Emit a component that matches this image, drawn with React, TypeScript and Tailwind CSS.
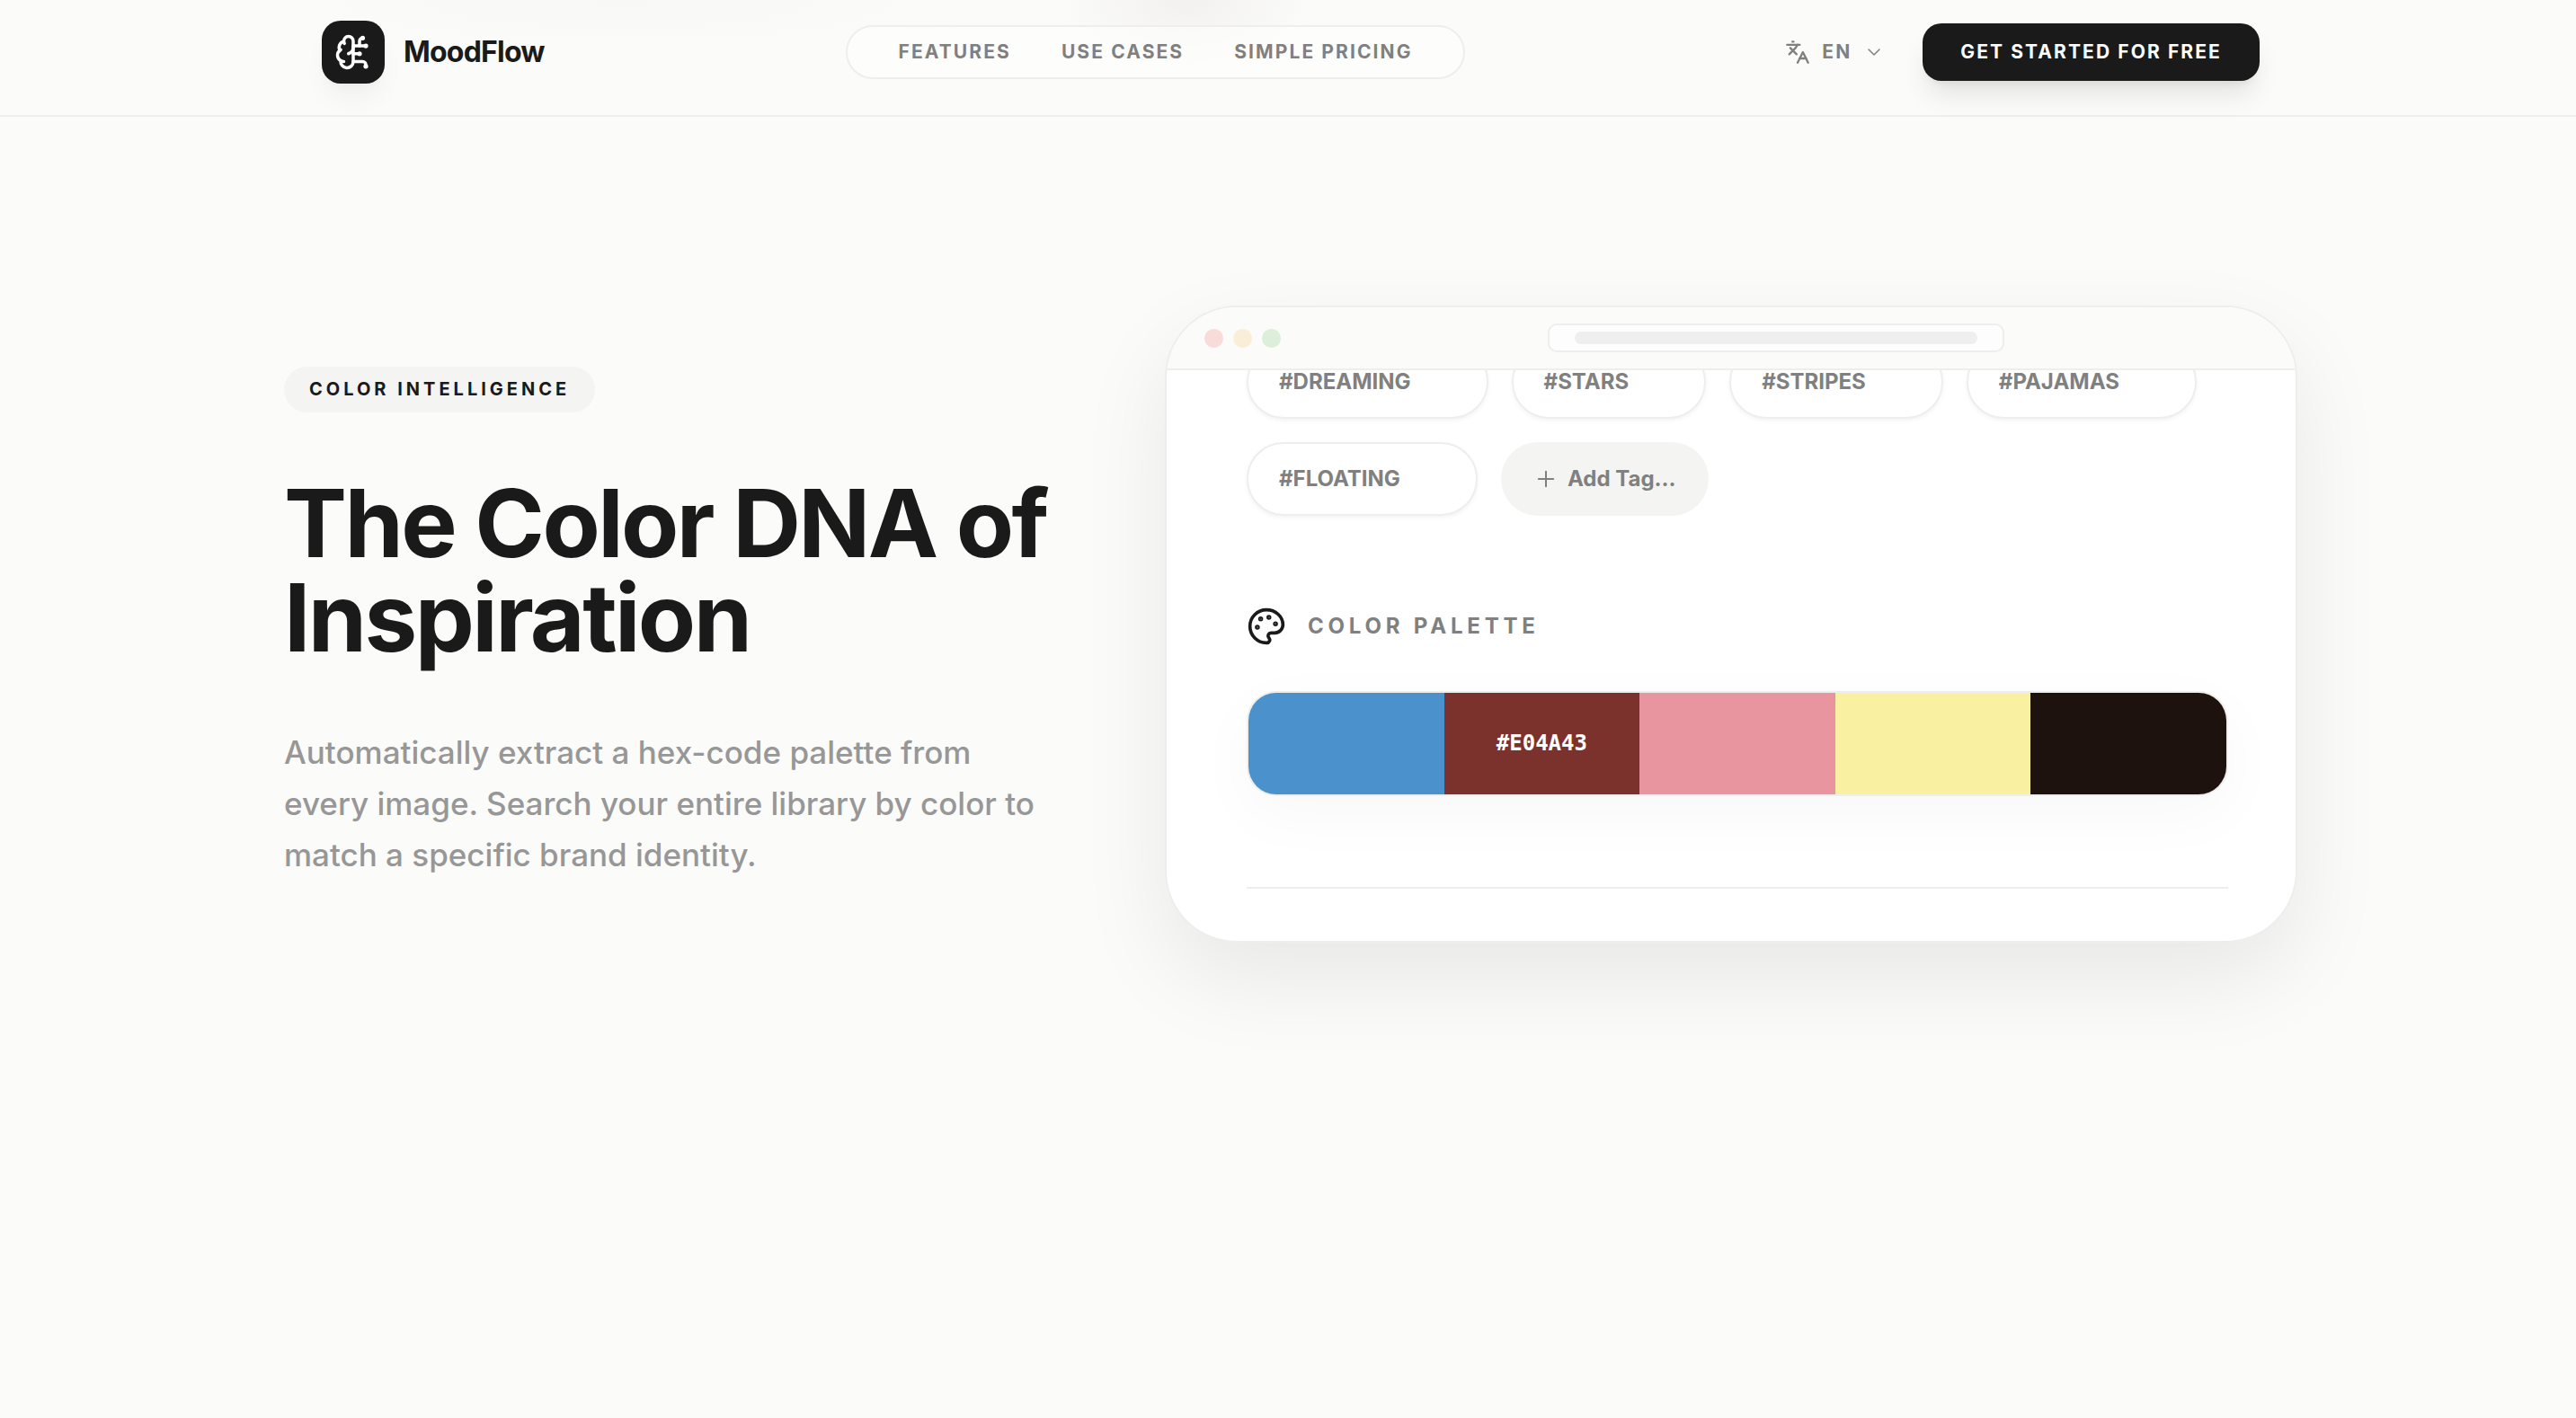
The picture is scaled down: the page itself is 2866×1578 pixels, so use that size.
import React from 'react';
import { BrainCircuit, ChevronDown, Languages, Palette, Plus } from 'lucide-react';

const NAV_ITEMS = ['Features', 'Use Cases', 'Simple Pricing'];

const TAGS = ['#DREAMING', '#STARS', '#STRIPES', '#PAJAMAS', '#FLOATING'];

const SWATCHES = [
  { bg: 'bg-[#4b91cc]', label: '' },
  { bg: 'bg-[#7c322c]', label: '#E04A43' },
  { bg: 'bg-[#e8959f]', label: '' },
  { bg: 'bg-[#faf0a2]', label: '' },
  { bg: 'bg-[#1e120e]', label: '' },
];

function Header() {
  return (
    <header className="border-b-2 border-[#eeeeed] bg-[radial-gradient(140px_80px_at_46%_0,#f2f1f0,transparent),radial-gradient(420px_60px_at_24%_0,#f8f8f7,transparent)] pl-1.5">
      <div className="mx-auto flex max-w-[2240px] items-center justify-between px-[42px] pt-[23px] pb-[35px]">
        <a href="#" className="flex items-center gap-[21px]">
          <span className="flex size-[70px] items-center justify-center rounded-[21px] bg-[#1a1a1a] text-white shadow-[0_20px_30px_-6px_rgba(0,0,0,0.05),0_8px_12px_-8px_rgba(0,0,0,0.05)]">
            <BrainCircuit size={42} />
          </span>
          <span className="text-[32px] font-bold tracking-tight">MoodFlow</span>
        </a>

        <nav className="flex items-center gap-14 rounded-full border-2 border-[#eeeeed] bg-white/50 px-14 py-3.5">
          {NAV_ITEMS.map((item) => (
            <a
              key={item}
              href="#"
              className="text-[21px] leading-7 font-bold tracking-widest text-[#808080] uppercase"
            >
              {item}
            </a>
          ))}
        </nav>

        <div className="flex items-center gap-[21px]">
          <button className="flex items-center gap-[13px] px-[21px] text-[#808080]">
            <Languages size={28} />
            <span className="text-[21px] leading-7 font-bold tracking-widest">EN</span>
            <ChevronDown size={24} strokeWidth={1.5} />
          </button>
          <button className="rounded-[21px] bg-[#1a1a1a] px-[42px] py-[18px] text-[21px] leading-7 font-bold tracking-widest text-white uppercase shadow-[0_20px_30px_-6px_rgba(0,0,0,0.1),0_8px_12px_-8px_rgba(0,0,0,0.1)]">
            Get Started for Free
          </button>
        </div>
      </div>
    </header>
  );
}

function BrowserBar() {
  return (
    <div className="flex shrink-0 items-center gap-3.5 border-b-2 border-[#eeeeed] bg-[#fbfbf9] px-[42px] py-[18px]">
      <div className="flex gap-[11px]">
        <span className="size-[21px] rounded-full bg-[#f8dcda]" />
        <span className="size-[21px] rounded-full bg-[#fbeed9]" />
        <span className="size-[21px] rounded-full bg-[#dbefd9]" />
      </div>
      <div className="flex flex-1 justify-center">
        {/* address field */}
        <div className="w-full max-w-[508px] rounded-[10px] border-2 border-[#eeeeed] bg-[#fdfdfd] px-7 py-[7px]">
          <div className="h-3.5 rounded-full bg-[#efefef]" />
        </div>
      </div>
    </div>
  );
}

function BrowserCard() {
  return (
    <div className="flex aspect-video flex-col overflow-hidden rounded-[80px] border-2 border-[#eeeeed] bg-white shadow-[0_40px_100px_rgba(0,0,0,0.08)]">
      <BrowserBar />

      {/* scrolled to the end, so the first row of tags is cut by the bar */}
      <div className="flex min-h-0 flex-1 flex-col justify-end overflow-hidden pr-[75px] pb-[58px] pl-[89px]">
        <div className="flex flex-wrap gap-[26px]">
          {TAGS.map((tag) => (
            <span
              key={tag}
              className="flex h-[82px] items-center rounded-full border-2 border-[#eeeeed] bg-white pr-[84px] pl-[34px] text-[24px] font-bold text-[#808080] shadow-[0_2px_5px_rgba(0,0,0,0.05)]"
            >
              {tag}
            </span>
          ))}
          <button className="flex h-[82px] items-center gap-2.5 rounded-full bg-[#f4f4f3] px-9 text-[24px] font-bold text-[#808080]">
            <Plus size={28} strokeWidth={1.75} />
            Add Tag...
          </button>
        </div>

        <h2 className="mt-[101px] flex items-center gap-6 text-[24px] font-bold tracking-[0.2em] text-[#808080] uppercase">
          <Palette size={44} className="text-[#1a1a1a]" />
          Color Palette
        </h2>

        <div className="mt-[50px] flex h-[117px] shrink-0 overflow-hidden rounded-[33px] border-2 border-[#eeeeee] shadow-[0_20px_70px_rgba(0,0,0,0.03)]">
          {SWATCHES.map(({ bg, label }) => (
            <div
              key={bg}
              className={`flex flex-1 items-center justify-center font-['DejaVu_Sans_Mono',monospace] text-[24px] font-bold text-white ${bg}`}
            >
              {label}
            </div>
          ))}
        </div>

        <hr className="mt-[101px] border-t-2 border-[#eeeeed]" />
      </div>
    </div>
  );
}

export default function App() {
  return (
    <div className="min-h-screen bg-[#fbfbf9] font-['Inter',sans-serif] text-[#1a1a1a]">
      <Header />

      <main className="pl-1.5">
        <section className="mx-auto grid max-w-[2240px] grid-cols-12 items-center gap-28 py-[210px]">
          <div className="col-span-5 flex flex-col items-start gap-[70px]">
            <span className="rounded-full bg-[#f4f4f3] px-7 py-2.5 text-[20px] leading-[31px] font-bold tracking-[0.2em] uppercase">
              Color Intelligence
            </span>
            <h1 className="text-[105px] leading-none font-bold tracking-tight">
              The Color DNA of Inspiration
            </h1>
            <p className="max-w-[848px] text-[35px] leading-[57px] font-medium text-[#979797]">
              Automatically extract a hex-code palette from every image. Search your entire library
              by color to match a specific brand identity.
            </p>
          </div>

          <div className="col-span-7">
            <BrowserCard />
          </div>
        </section>
      </main>
    </div>
  );
}
